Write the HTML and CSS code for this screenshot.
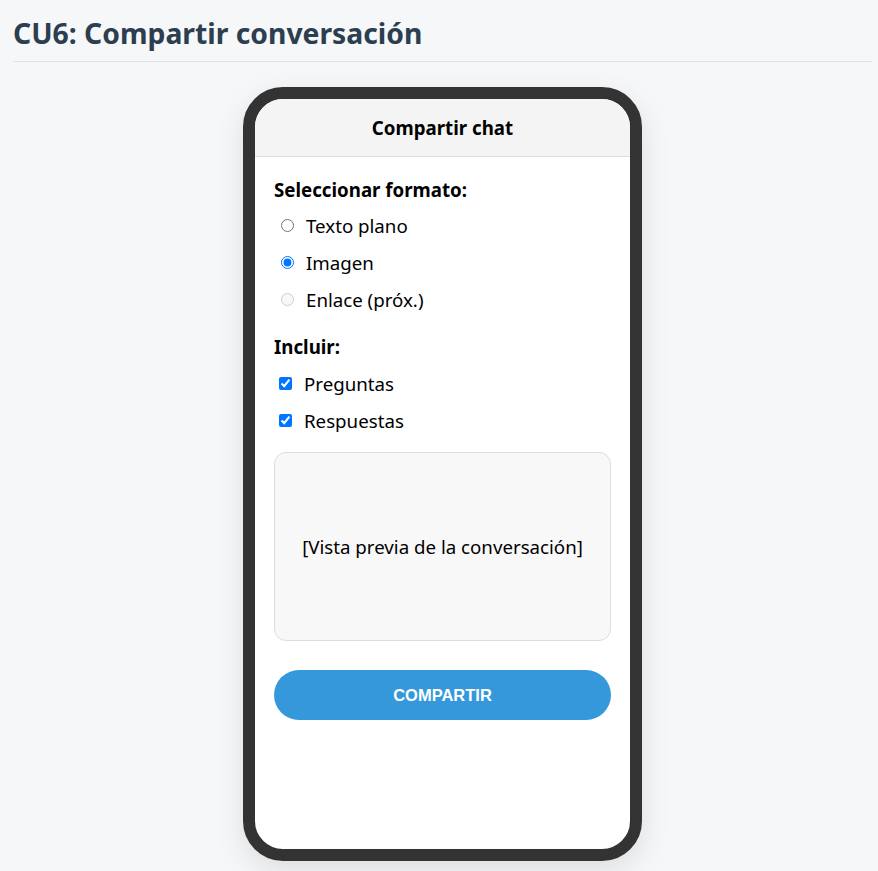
FILE: index.html
```html
<!DOCTYPE html>
<html lang="es">
<head>
<meta charset="utf-8">
<title>CU6: Compartir conversación</title>
<link rel="stylesheet" href="styles.css">
</head>
<body>
<h1 class="page-title">CU6: Compartir conversación</h1>
<div class="stage">
  <div class="phone">
    <div class="screen">
      <div class="app-header">Compartir chat</div>
      <div class="app-body">
        <div class="section-label">Seleccionar formato:</div>
        <label class="option"><input type="radio" name="fmt"><span>Texto plano</span></label>
        <label class="option"><input type="radio" name="fmt" checked><span>Imagen</span></label>
        <label class="option"><input type="radio" name="fmt" disabled><span>Enlace (próx.)</span></label>
        <div class="section-label second">Incluir:</div>
        <label class="option check"><input type="checkbox" checked><span>Preguntas</span></label>
        <label class="option check"><input type="checkbox" checked><span>Respuestas</span></label>
        <div class="preview">[Vista previa de la conversación]</div>
        <button class="share-btn">COMPARTIR</button>
      </div>
    </div>
  </div>
</div>
</body>
</html>
```
FILE: styles.css
```css
html, body {
  margin: 0;
  padding: 0;
}
body {
  background: #f6f7f9;
  font-family: "Noto Sans", "Open Sans", sans-serif;
  color: #000;
  padding: 0 6px 0 13px;
}
.page-title {
  margin: 0;
  padding: 14px 0 9px;
  font-size: 28.3px;
  line-height: 38px;
  font-weight: 700;
  color: #2c3e50;
  border-bottom: 1px solid #dfe2e6;
}
.stage {
  display: flex;
  justify-content: center;
  padding-top: 25px;
  padding-bottom: 10px;
}
.phone {
  width: 375px;
  height: 750px;
  border: 12px solid #333;
  border-radius: 40px;
  background: #fff;
  overflow: hidden;
  box-shadow: 0 10px 30px rgba(0,0,0,0.1);
}
.screen {
  display: flex;
  flex-direction: column;
  height: 100%;
}
.app-header {
  height: 57px;
  background: #f4f4f4;
  border-bottom: 1px solid #ddd;
  display: flex;
  align-items: center;
  justify-content: center;
  font-weight: 700;
  font-size: 18.7px;
}
.app-body {
  padding: 18px 19px;
  display: flex;
  flex-direction: column;
}
.section-label {
  font-weight: 700;
  font-size: 18.7px;
  line-height: 30px;
  margin-bottom: 7px;
}
.section-label.second {
  margin-top: 9px;
  margin-bottom: 8px;
}
.option {
  display: flex;
  align-items: center;
  gap: 12px;
  font-size: 18.7px;
  line-height: 27px;
  margin: 0 0 10px 0;
}
.option input {
  margin: 0 0 0 7px;
  width: 13px;
  height: 13px;
  flex: none;
}
.option.check input {
  margin-left: 5px;
}
.preview {
  margin-top: 8px;
  height: 187px;
  border: 1px solid #ddd;
  border-radius: 12px;
  background: #f8f8f8;
  display: flex;
  align-items: center;
  justify-content: center;
  font-size: 18.7px;
}
.share-btn {
  margin-top: 29px;
  height: 50px;
  border: none;
  border-radius: 25px;
  background: #3498db;
  color: #fff;
  font-family: "Liberation Sans", Arial, sans-serif;
  font-weight: 700;
  font-size: 16.5px;
}
```
